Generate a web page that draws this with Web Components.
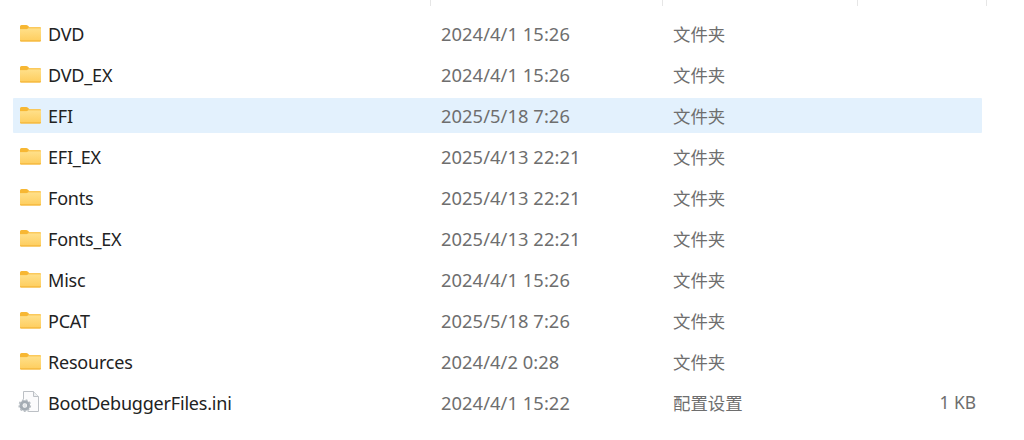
<!DOCTYPE html>
<html><head><meta charset="utf-8"><style>
html,body{margin:0;padding:0;background:#fff;overflow:hidden}
</style></head><body>
<template id="folder-t"><style>:host{display:block;width:21px;height:17px}svg{display:block}</style>
<svg width="21" height="17" viewBox="0 0 21 17"><path d="M0 1.5Q0 0 1.5 0H6.2Q7.2 0 8 .8L9.4 2.2H19.8Q21 2.2 21 3.4V6H0Z" fill="#f7b733"/><path d="M8.6 2.2H19.8Q21 2.2 21 3.4V5H0V4H6.6Q7.4 4 8 3.2Z" fill="#fbc95a"/><path d="M0 4.2H6.6Q7.6 4.2 8.3 3.4H21V15H0Z" fill="url(#g)"/><path d="M0 14.9H21V15.6Q21 16.8 19.8 16.8H1.2Q0 16.8 0 15.6Z" fill="#f7bd45"/><defs><linearGradient id="g" x1="0" y1="0" x2="0" y2="1"><stop offset="0" stop-color="#ffe08a"/><stop offset="1" stop-color="#fecf62"/></linearGradient></defs></svg></template>
<template id="ini-t"><style>:host{display:block;width:21px;height:23px}svg{display:block;overflow:visible}</style>
<svg width="21" height="23" viewBox="0 0 21 23"><path d="M3.5 .5H13.5L18.5 5.5V20.5H3.5Z" fill="#fbfbfc" stroke="#bcc0c5"/><path d="M13.5 .5V5.5H18.5" fill="#eef0f2" stroke="#bcc0c5"/><circle cx="4.8" cy="14.5" r="6.8" fill="#fff"/><circle cx="4.8" cy="14.5" r="3.8" fill="none" stroke="#a4acb3" stroke-width="3"/><circle cx="4.8" cy="14.5" r="5.6" fill="none" stroke="#b6bcc2" stroke-width="1.6" stroke-dasharray="2 1.8"/><circle cx="4.8" cy="14.5" r="1.7" fill="#e4e7e9"/></svg></template>
<template id="header-t"><style>:host{display:grid;grid-template-columns:431px 232px 195px 129px 1fr;height:6px;margin-bottom:4px}
i{display:block;border-right:1.5px solid #e6e6e6;box-sizing:border-box}</style><i></i><i></i><i></i><i></i></template>
<template id="row-t"><style>
:host{display:grid;grid-template-columns:28px 7px 386px 232px 1fr;height:35px;align-items:center;margin-left:13px;width:969px;padding-left:7px;box-sizing:border-box;border-radius:1px;font:17.4px "Noto Sans","Noto Sans CJK SC",sans-serif;color:#6e6e6e}
:host([selected]){background:#e3f1fd}
.ic{grid-column:1;display:flex;align-items:center;height:23px}
.name{grid-column:2 / 4;color:#222;white-space:nowrap;font-size:18px;letter-spacing:-.2px}
.date{grid-column:4;white-space:nowrap;font-size:18.3px;letter-spacing:.08px}
.rest{grid-column:5;display:flex;justify-content:space-between;padding-right:6px;white-space:nowrap}
</style><div class="ic"><slot name="icon"></slot></div><div class="name"><slot></slot></div><div class="date"><slot name="date"></slot></div><div class="rest"><slot name="type"></slot><slot name="size"></slot></div></template>
<template id="list-t"><style>:host{display:flex;flex-direction:column;gap:6px}</style><slot></slot></template>
<file-list id="l"></file-list>
<script>
function def(tag,tid){customElements.define(tag,class extends HTMLElement{constructor(){super();this.attachShadow({mode:'open'}).appendChild(document.getElementById(tid).content.cloneNode(true));}});}
def('folder-icon','folder-t');def('ini-icon','ini-t');def('list-header','header-t');def('file-row','row-t');def('file-list','list-t');
const data=[['DVD','2024/4/1 15:26'],['DVD_EX','2024/4/1 15:26'],['EFI','2025/5/18 7:26'],['EFI_EX','2025/4/13 22:21'],['Fonts','2025/4/13 22:21'],['Fonts_EX','2025/4/13 22:21'],['Misc','2024/4/1 15:26'],['PCAT','2025/5/18 7:26'],['Resources','2024/4/2 0:28'],['BootDebuggerFiles.ini','2024/4/1 15:22','配置设置','1 KB']];
const l=document.getElementById('l');
l.appendChild(document.createElement('list-header'));
data.forEach((d,i)=>{const r=document.createElement('file-row');if(i==2)r.setAttribute('selected','');
const ic=document.createElement(d[2]?'ini-icon':'folder-icon');ic.slot='icon';r.appendChild(ic);
r.appendChild(document.createTextNode(d[0]));
const s=(n,t)=>{const e=document.createElement('span');e.slot=n;e.textContent=t;r.appendChild(e)};
s('date',d[1]);s('type',d[2]||'文件夹');if(d[3])s('size',d[3]);l.appendChild(r);});
</script></body></html>
